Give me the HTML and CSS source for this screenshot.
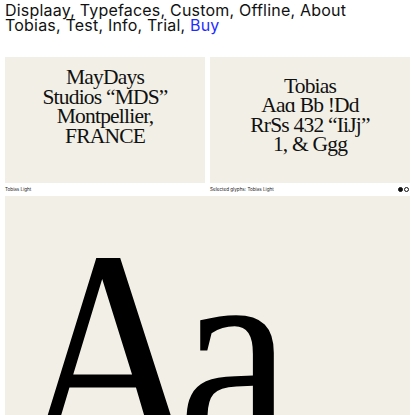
FILE: index.html
```html
<!DOCTYPE html>
<html>
<head>
<meta charset="utf-8">
<link rel="stylesheet" href="styles.css">
</head>
<body>
<nav class="nav">
  <a>Displaay</a>, <a>Typefaces</a>, <a>Custom</a>, <a>Offline</a>, <a>About</a><br>
  <a>Tobias</a>, <a>Test</a>, <a>Info</a>, <a>Trial</a>, <a class="buy">Buy</a>
</nav>
<main class="grid">
  <figure class="item">
    <div class="card">
      <p class="specimen">MayDays<br>Studios “MDS”<br>Montpellier,<br>FRANCE</p>
    </div>
    <figcaption class="caption"><span>Tobias Light</span></figcaption>
  </figure>
  <figure class="item">
    <div class="card">
      <p class="specimen second">Tobias<br>Aaɑ Bb !Dd<br>RrSs 432 “IiJj”<br>1, &amp; Ggg</p>
    </div>
    <figcaption class="caption"><span>Selected glyphs: Tobias Light</span><span class="dots"><i class="dot on"></i><i class="dot"></i></span></figcaption>
  </figure>
  <section class="big">
    <p class="aa">Aa</p>
  </section>
</main>
</body>
</html>
```
FILE: styles.css
```css
html, body {
  margin: 0;
  padding: 0;
  background: #ffffff;
  overflow: hidden;
}
body {
  padding: 3px 5px 0 5px;
  color: #111;
  height: 412px;
}
.nav {
  font-family: "Inter", "Liberation Sans", sans-serif;
  font-size: 16px;
  line-height: 15px;
  letter-spacing: 0.2px;
  color: #111;
  height: 54px;
  white-space: nowrap;
}
.nav a { color: inherit; }
.nav .buy { color: #1f2cff; }
.grid {
  display: grid;
  grid-template-columns: 1fr 1fr;
  column-gap: 5px;
}
.item {
  margin: 0;
}
.card {
  background: #f2f0e6;
  height: 126px;
  display: flex;
  align-items: center;
  justify-content: center;
}
.specimen {
  margin: 0;
  font-family: "Liberation Serif", "DejaVu Serif", serif;
  font-size: 21.5px;
  line-height: 19.5px;
  letter-spacing: -0.8px;
  text-align: center;
  color: #111;
  padding-bottom: 26px;
}
.specimen.second {
  padding-bottom: 9px;
}
.caption {
  height: 13px;
  display: flex;
  align-items: center;
  justify-content: space-between;
  font-family: "Inter", "Liberation Sans", sans-serif;
  font-size: 4.6px;
  color: #222;
}
.dots {
  display: flex;
  gap: 1.5px;
  align-items: center;
  padding-right: 1px;
}
.dot {
  display: block;
  width: 3px;
  height: 3px;
  border-radius: 50%;
  border: 0.6px solid #111;
}
.dot.on { background: #111; }
.big {
  grid-column: 1 / 3;
  background: #f2f0e6;
  height: 230px;
  overflow: hidden;
}
.aa {
  margin: 0;
  font-family: "Liberation Serif", "DejaVu Serif", serif;
  font-size: 300px;
  line-height: 1;
  letter-spacing: -30px;
  padding: 9px 0 0 14px;
  color: #000;
  transform: scaleX(0.86);
  transform-origin: 0 0;
  white-space: nowrap;
}
```
